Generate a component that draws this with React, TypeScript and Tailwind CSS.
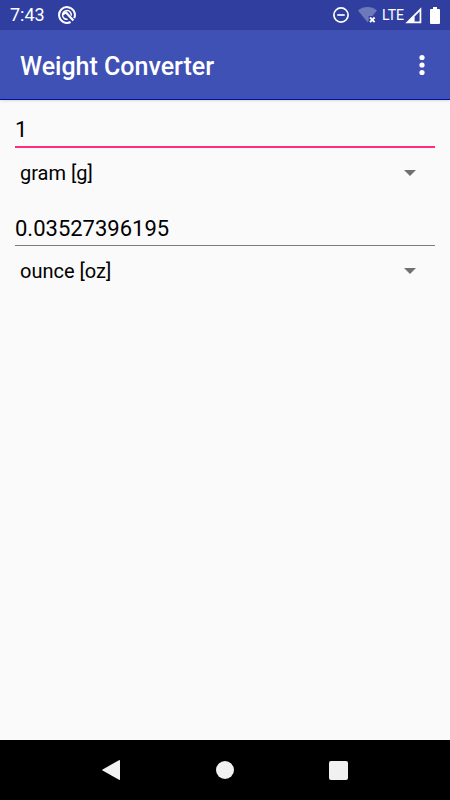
import { useState } from "react";

type Unit = {
  id: string;
  label: string;
  grams: number;
};

const UNITS: Unit[] = [
  { id: "mg", label: "milligram [mg]", grams: 0.001 },
  { id: "g", label: "gram [g]", grams: 1 },
  { id: "kg", label: "kilogram [kg]", grams: 1000 },
  { id: "oz", label: "ounce [oz]", grams: 28.349523125 },
  { id: "lb", label: "pound [lb]", grams: 453.59237 },
];

function convert(value: string, from: string, to: string) {
  const amount = parseFloat(value);
  const source = UNITS.find((u) => u.id === from);
  const target = UNITS.find((u) => u.id === to);
  if (Number.isNaN(amount) || !source || !target) return "";
  return String(Number(((amount * source.grams) / target.grams).toPrecision(10)));
}

function StatusBar() {
  return (
    <div className="flex h-[30px] items-center justify-between bg-[#303f9f] px-[10px] text-white">
      <div className="flex items-center gap-[13px]">
        <span className="text-[18px] leading-5">7:43</span>
        <svg viewBox="0 0 18 18" className="size-[18px]" fill="none" stroke="currentColor">
          <path d="M12.6 16A7.9 7.9 0 1 1 16.2 12.2" strokeWidth="2" />
          <path d="M9.6 13.3A4.4 4.4 0 1 1 13.3 9.6" strokeWidth="1.5" />
          <path d="M4.8 8.4L8 6.4L15.4 14.4" strokeWidth="2.2" />
        </svg>
      </div>

      <div className="flex items-center">
        <svg viewBox="0 0 16 16" className="mr-[9px] size-4" fill="none" stroke="currentColor" strokeWidth="1.7">
          <circle cx="8" cy="8" r="7.1" />
          <path d="M4.3 8h7.4" />
        </svg>
        <svg viewBox="0 0 19 16" className="mr-[5px] h-4 w-[19px]">
          <path d="M0 3.4C5.2-1.1 13.8-1.1 19 3.4L14.4 9H10.7V13.7L9.5 15.2z" fill="#fff" fillOpacity=".3" />
          <path d="M12 10.5L16.6 15.1M16.6 10.5L12 15.1" stroke="#fff" strokeWidth="1.9" />
        </svg>
        <span className="text-[14px] leading-5">LTE</span>
        <svg viewBox="0 0 17 17" className="ml-px mr-[8px] size-[17px]">
          <path
            d="M16.3 .3V16.3H.3zM14.6 4.6L9.6 9.6V14.6H14.6z"
            fill="currentColor"
            fillRule="evenodd"
          />
        </svg>
        <svg viewBox="0 0 10 17" className="h-[17px] w-[10px]" fill="currentColor">
          <path d="M3 0H7V2H9Q10 2 10 3V16Q10 17 9 17H1Q0 17 0 16V3Q0 2 1 2H3z" />
        </svg>
      </div>
    </div>
  );
}

function UnitSelect({ label, value, onChange }: { label: string; value: string; onChange: (id: string) => void }) {
  return (
    <div className="grid h-[50px] items-center">
      <select
        aria-label={label}
        value={value}
        onChange={(e) => onChange(e.target.value)}
        className="col-start-1 row-start-1 h-full w-full appearance-none bg-transparent pl-[5px] text-[20px] text-black focus:outline-none"
      >
        {UNITS.map((unit) => (
          <option key={unit.id} value={unit.id}>
            {unit.label}
          </option>
        ))}
      </select>
      <svg
        viewBox="0 0 12 6"
        className="pointer-events-none col-start-1 row-start-1 mr-[19px] h-[6px] w-[12px] justify-self-end"
        fill="#707070"
      >
        <path d="M0 0H12L6 6z" />
      </svg>
    </div>
  );
}

export default function App() {
  const [amount, setAmount] = useState("1");
  const [from, setFrom] = useState("g");
  const [to, setTo] = useState("oz");

  return (
    <div className="flex min-h-screen flex-col bg-[#fafafa] font-['Roboto',sans-serif]">
      <StatusBar />

      <header className="flex h-[70px] items-center justify-between border-b border-[#0010a0] bg-[#3f51b5] pl-5 pr-3 text-white shadow-sm">
        <h1 className="pt-1 text-[25px] font-medium leading-8">Weight Converter</h1>
        <button type="button" aria-label="More options" className="flex h-10 w-8 items-center justify-center">
          <svg viewBox="0 0 6 22" className="h-[22px] w-[6px]" fill="currentColor">
            <circle cx="3" cy="3.5" r="2.6" />
            <circle cx="3" cy="11" r="2.6" />
            <circle cx="3" cy="18.5" r="2.6" />
          </svg>
        </button>
      </header>

      <main className="flex-1 px-[15px] pt-[10px]">
        <input
          type="text"
          inputMode="decimal"
          aria-label="Amount"
          value={amount}
          onChange={(e) => setAmount(e.target.value)}
          className="block h-[38px] w-full border-b-2 border-[#ff2d7e] bg-transparent pt-[3px] text-[22px] text-black focus:outline-none"
        />
        <UnitSelect label="From unit" value={from} onChange={setFrom} />

        <input
          type="text"
          readOnly
          aria-label="Result"
          value={convert(amount, from, to)}
          className="mt-[10px] block h-[38px] w-full border-b border-[#7d7d7d] bg-transparent pt-[3px] text-[22px] text-black focus:outline-none"
        />
        <UnitSelect label="To unit" value={to} onChange={setTo} />
      </main>

      <nav className="flex h-[60px] items-center justify-center gap-[73px] bg-black text-[#f1f1f1]">
        <button type="button" aria-label="Back" className="flex size-10 items-center justify-center">
          <svg viewBox="0 0 20 22" className="h-[22px] w-[20px]" fill="currentColor">
            <path d="M17 1.2Q18 .7 18 1.7V20.3Q18 21.3 17 20.8L.6 11.6Q-.2 11 .6 10.4z" />
          </svg>
        </button>
        <button type="button" aria-label="Home" className="flex size-10 items-center justify-center">
          <span className="size-[18px] rounded-full bg-[#f1f1f1]" />
        </button>
        <button type="button" aria-label="Recent apps" className="flex size-10 items-center justify-center">
          <span className="size-[19px] rounded-[2px] bg-[#f1f1f1]" />
        </button>
      </nav>
    </div>
  );
}
